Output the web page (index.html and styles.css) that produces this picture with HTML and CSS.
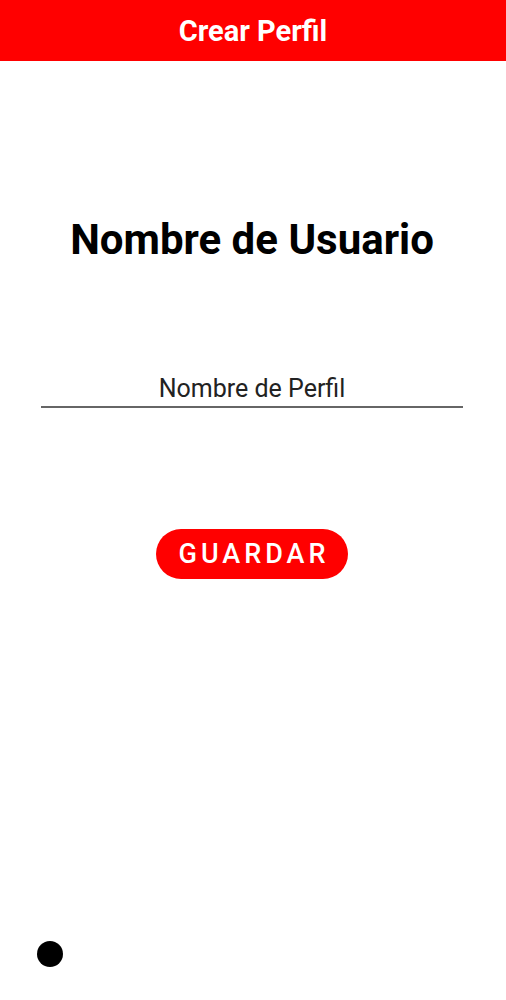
FILE: index.html
```html
<!DOCTYPE html>
<html lang="es">
<head>
  <meta charset="UTF-8">
  <meta name="viewport" content="width=device-width, initial-scale=1.0">
  <title>Crear Perfil</title>
  <link rel="stylesheet" href="styles.css">
</head>
<body>
  <header class="app-bar">
    <h1>Crear Perfil</h1>
  </header>

  <main class="content">
    <h2 class="title">Nombre de Usuario</h2>

    <div class="field">
      <input type="text" id="profileName" value="Nombre de Perfil">
    </div>

    <button type="button" class="btn">GUARDAR</button>
  </main>

  <div class="dot"></div>
</body>
</html>
```

FILE: styles.css
```css
body {
  font-family: Roboto, "Noto Sans", sans-serif;
  background-color: #fff;
  margin: 0;
  padding: 0;
  height: 100vh;
  position: relative;
}

.app-bar {
  background-color: #ff0000;
  height: 61px;
  display: flex;
  justify-content: center;
  align-items: center;
}

.app-bar h1 {
  margin: 0;
  color: #fff;
  font-size: 29px;
  font-weight: 700;
}

.content {
  display: flex;
  flex-direction: column;
  align-items: center;
  padding: 0 43px 0 41px;
}

.title {
  margin: 154px 0 0 0;
  font-size: 42px;
  font-weight: 700;
  color: #000;
  line-height: 50px;
}

.field {
  width: 100%;
  margin-top: 109px;
}

.field input {
  width: 100%;
  box-sizing: border-box;
  border: none;
  border-bottom: 2px solid #666;
  padding: 0 0 2px 0;
  font-family: Roboto, sans-serif;
  font-size: 25px;
  line-height: 30px;
  color: #222;
  text-align: center;
  background: transparent;
}

.field input:focus {
  outline: none;
}

.btn {
  margin-top: 121px;
  width: 192px;
  height: 50px;
  border: none;
  border-radius: 25px;
  background-color: #ff0000;
  color: #fff;
  font-family: Roboto, sans-serif;
  font-size: 27px;
  font-weight: 500;
  letter-spacing: 4px;
  padding: 0 0 0 4px;
  cursor: pointer;
}

.dot {
  position: absolute;
  left: 37px;
  top: 941px;
  width: 26px;
  height: 26px;
  border-radius: 50%;
  background-color: #000;
}
```
